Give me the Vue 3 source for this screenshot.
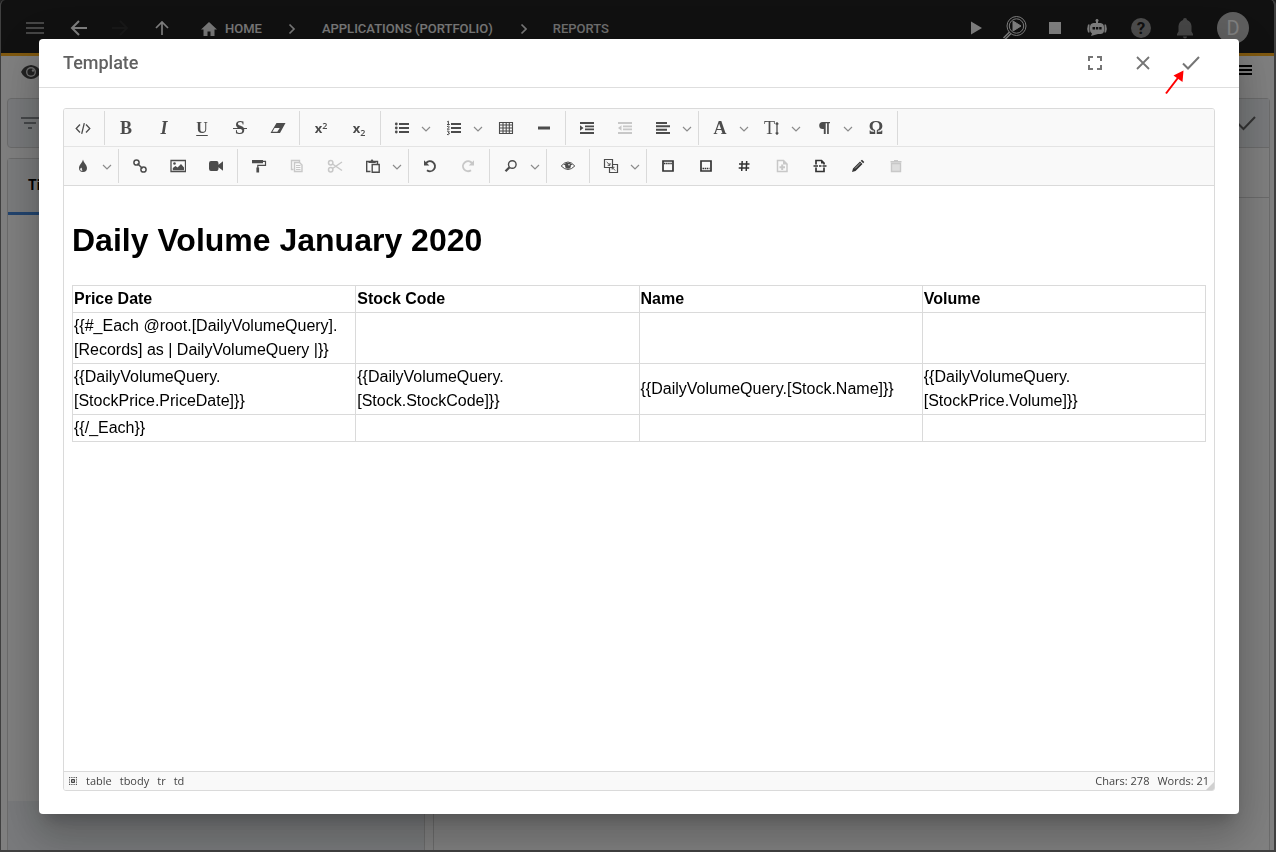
<script setup>
const icons = {
  source: '<path d="M5 4.500 1.200 8.500 5 12.500M11 4.500 14.800 8.500 11 12.500M9.300 3.200 6.700 13.800" fill="none" stroke="currentColor" stroke-width="1.300"/>',
  eraser: '<path d="M6.500 3H15.500L10 13H.5ZM4.600 8 2.400 11.800H7.300L9.700 8Z" fill="currentColor" fill-rule="evenodd"/>',
  ul: '<path d="M5 3h10v2H5zM5 7h10v2H5zM5 11h10v2H5z" fill="currentColor"/><circle cx="2.300" cy="4" r="1.400" fill="currentColor"/><circle cx="2.300" cy="8" r="1.400" fill="currentColor"/><circle cx="2.300" cy="12" r="1.400" fill="currentColor"/>',
  ol: '<path d="M5 3h10v2H5zM5 7h10v2H5zM5 11h10v2H5z" fill="currentColor"/><path d="M1.200 1.800 2.400 1.200V4.500M1 4.500h2.800M1 6.700Q2.500 5.500 3.200 6.600 3.400 7.500 1.200 9.200H3.600M1 11.200Q3.300 10.500 3.300 12 3.200 12.700 2 12.700 3.600 12.700 3.400 13.900 3 15 1 14.500" fill="none" stroke="currentColor"/>',
  table: '<path d="M1.500 2.500h13v11h-13zM1.500 5h13M1.500 8h13M1.500 11h13M5 3v10M8.200 3v10M11.300 3v10" fill="none" stroke="currentColor" stroke-width="1.100"/>',
  hr: '<path d="M2 6.500h12v3H2z" fill="currentColor"/>',
  indent: '<path d="M1 2h14v2H1zM6 5.500h9v1.800H6zM6 8.500h9v1.800H6zM1 12h14v2H1zM1 5.200 4.500 8 1 10.800z" fill="currentColor"/>',
  outdent: '<path d="M1 2h14v2H1zM6 5.500h9v1.800H6zM6 8.500h9v1.800H6zM1 12h14v2H1zM4.500 5.200 1 8l3.500 2.800z" fill="currentColor"/>',
  left: '<path d="M1 2h11v2H1zM1 5.300h14v2H1zM1 8.700h11v2H1zM1 12h14v2H1z" fill="currentColor"/>',
  vsize: '<path d="M13 3V14M11.700 4.300 13 2.700 14.300 4.300M11.700 12.700 13 14.300 14.300 12.700" fill="none" stroke="currentColor" stroke-width="1.300"/>',
  para: '<path d="M6.700 2H14v1.300h-1.200V14h-1.700V3.300H9.700V14H7.800V9H6.700A3.500 3.500 0 0 1 6.700 2z" fill="currentColor"/>',
  drop: '<path d="M8 1.500C8.500 4.500 12 7 12 10A4 4 0 0 1 4 10C4 7 7.500 4.500 8 1.500ZM6.900 9.700A1.500 1.500 0 1 0 7.700 12.300C6.700 11.800 6.600 10.500 6.900 9.700Z" fill="currentColor" fill-rule="evenodd"/>',
  link: '<circle cx="4.500" cy="4.500" r="2.600"/><circle cx="11.500" cy="11.500" r="2.600"/><path d="M5.500 5.500 10.500 10.500"/>',
  image: '<path d="M1 2.500h14.500v11H1z" fill="none" stroke="currentColor" stroke-width="1.300"/><circle cx="4.500" cy="5.500" r="1.300" fill="currentColor"/><path d="M2.800 12.200V10L5.500 8l2 1.500L11 6l3 3.500v2.700z" fill="currentColor"/>',
  video: '<path d="M3 3h5.500Q10.500 3 10.500 5.200V6.800L15 3.200V12.800L10.500 9.200V10.800Q10.500 13 8.500 13H3Q1 13 1 10.800V5.200Q1 3 3 3z" fill="currentColor"/>',
  roller: '<path d="M1 2h11v3.300H1z" fill="currentColor"/><path d="M12 3.300h2.500v4H6.800V10" fill="none" stroke="currentColor" stroke-width="1.200"/><path d="M5.400 9.500h2.700v5H5.400z" fill="currentColor"/>',
  copy: '<path d="M4.500 11.500h-2v-9h8v2" fill="none" stroke="currentColor" stroke-width="1.400"/><path d="M5.500 4.500h5l2.500 2.500v6.500H5.500z" fill="none" stroke="currentColor" stroke-width="1.400"/><path d="M7 7.500h4.500M7 9.500h4.500M7 11.500h4.500" stroke="currentColor" stroke-width="1.100"/>',
  cut: '<circle cx="3.700" cy="4.700" r="2.200"/><circle cx="3.700" cy="11.700" r="2.200"/><path d="M5.500 6 15 12.500M5.500 10.500 15 4M9 8.500H10"/>',
  paste: '<path d="M5.500 13.500H1.700v-10H12.500V6" fill="none" stroke="currentColor" stroke-width="1.400"/><path d="M3.500 5V3H5.500L7 1l1.500 2h2.200v2z" fill="currentColor"/><path d="M7.200 6.500h7v7.800h-7z" fill="none" stroke="currentColor" stroke-width="1.400"/>',
  undo: '<path d="M4 5.200A5 5 0 1 1 5 12.200" fill="none" stroke="currentColor" stroke-width="1.900"/><path d="M2 2.300V7.500H7.300z" fill="currentColor"/>',
  redo: '<path d="M12 5.200A5 5 0 1 0 11 12.200" fill="none" stroke="currentColor" stroke-width="1.900"/><path d="M14 2.300V7.500H8.700z" fill="currentColor"/>',
  find: '<circle cx="9.300" cy="6.500" r="3.800" fill="none" stroke="currentColor" stroke-width="1.400"/><path d="M6.300 9.500 2.500 13.300" stroke="currentColor" stroke-width="2.300"/>',
  eye: '<path d="M1.200 8Q8 0 14.800 8 8 15 1.200 8z" fill="none" stroke="currentColor"/><path d="M3.500 6.500Q8 3 12.500 6.500L11 7.300H5z" fill="currentColor"/><circle cx="8" cy="7.800" r="2.900" fill="currentColor"/><circle cx="9" cy="6.700" r=".8" fill="#f9f9f9"/>',
  translate: '<path d="M1.500 1.500h8v8h-8zM9.700 6.500h4.800v8h-8V9.700" fill="none" stroke="currentColor" stroke-width="1.200"/><path d="M3.700 4 7 7.300M4.700 7.300H7V5M8.700 9l3.500 3.500M9.200 11.500V9.300H11.500" fill="none" stroke="currentColor"/>',
  header: '<path d="M3 3h10v10H3z" fill="none" stroke="currentColor" stroke-width="1.700"/><path d="M4 5.500h8" stroke="currentColor" stroke-width="1.500" stroke-dasharray="1.500 .6"/>',
  footer: '<path d="M3 3h10v10H3z" fill="none" stroke="currentColor" stroke-width="1.700"/><path d="M4.500 10.500h7" stroke="currentColor" stroke-width="1.500" stroke-dasharray="1.500 .6"/>',
  hash: '<path d="M6.200 3 5.700 13M10.700 3 10.200 13M3 6h10.500M2.700 10H13.200" stroke="currentColor" stroke-width="1.500"/>',
  page: '<path d="M3.500 2.500h6L13 6v7.500H3.500z" fill="none" stroke="currentColor" stroke-width="1.500"/><path d="M9 2v4.500h4.500z" fill="currentColor"/><path d="M8.200 6.500V12M5.500 9.200H11" stroke="currentColor" stroke-width="2"/>',
  break: '<path d="M4 6.500V2.500h5.500L12 5v1.500M4 9.500v4h8v-4M1.500 8H6M7 8h2.500M10.500 8h4" fill="none" stroke="currentColor" stroke-width="1.700"/><path d="M9 2v3.500h3.500z" fill="currentColor"/>',
  pencil: '<path d="M2 14 3 10.500 10 3.500 12.500 6 5.500 13zM10.700 2.800 12 1.700 14.300 4 13.200 5.200z" fill="currentColor"/><path d="M5 10.500 10.500 5" stroke="#aaa"/>',
  trash: '<path d="M3.500 5.500h9v8h-9zM2.500 3.700h11M6 2.700h4" fill="none" stroke="currentColor" stroke-width="1.400"/><path d="M4 6h8v7H4z" fill="currentColor" opacity=".55"/>'
}
const stroked = ['link', 'cut']

const b = (label, icon, opt = {}) => ({ label, icon, ...opt })
const t = (label, text, cls, opt = {}) => ({ label, text, cls, ...opt })
const rows = [
  [
    [b('Source', 'source')],
    [t('Bold', 'B', 'bold'), t('Italic', 'I', 'italic'), t('Underline', 'U', 'under'), t('Strike through', 'S', 'strike'), b('Clear formatting', 'eraser')],
    [t('Superscript', 'x', 'script', { sup: '2' }), t('Subscript', 'x', 'script', { sub: '2' })],
    [b('Bulleted list', 'ul', { menu: true }), b('Numbered list', 'ol', { menu: true }), b('Insert table', 'table'), b('Horizontal line', 'hr')],
    [b('Indent', 'indent'), b('Outdent', 'outdent', { off: true }), b('Align', 'left', { menu: true })],
    [t('Font family', 'A', 'bold', { menu: true }), t('Font size', 'T', 'size', { menu: true, icon: 'vsize' }), b('Paragraph format', 'para', { menu: true }), t('Symbols', 'Ω', 'bold')]
  ],
  [
    [b('Text colour', 'drop', { menu: true })],
    [b('Link', 'link'), b('Image', 'image'), b('Video', 'video')],
    [b('Copy format', 'roller'), b('Copy', 'copy', { off: true }), b('Cut', 'cut', { off: true }), b('Paste', 'paste', { menu: true })],
    [b('Undo', 'undo'), b('Redo', 'redo', { off: true })],
    [b('Find', 'find', { menu: true })],
    [b('Preview', 'eye')],
    [b('Fields', 'translate', { menu: true })],
    [b('Page header', 'header', { dark: true }), b('Page footer', 'footer', { dark: true }), b('Page number', 'hash', { dark: true }), b('Add page', 'page', { off: true }), b('Page break', 'break', { dark: true }), b('Edit', 'pencil', { dark: true }), b('Delete', 'trash', { off: true })]
  ]
]

const columns = ['Price Date', 'Stock Code', 'Name', 'Volume']
const records = [
  ['{{#_Each @root.[DailyVolumeQuery].[Records] as | DailyVolumeQuery |}}', '', '', ''],
  ['{{DailyVolumeQuery.[StockPrice.PriceDate]}}', '{{DailyVolumeQuery.[Stock.StockCode]}}', '{{DailyVolumeQuery.[Stock.Name]}}', '{{DailyVolumeQuery.[StockPrice.Volume]}}'],
  ['{{/_Each}}', '', '', '']
]
const path = ['table', 'tbody', 'tr', 'td']
</script>

<template>
  <div class="app">
    <header class="topbar">
      <button class="nav wide" aria-label="Menu"><svg class="dim" width="20" height="20" viewBox="0 0 20 20"><path d="M1 5h18M1 10h18M1 15h18" stroke="currentColor" stroke-width="2" /></svg></button>
      <button class="nav wide" aria-label="Back"><svg width="20" height="20" viewBox="0 0 20 20" fill="none" stroke="currentColor" stroke-width="2"><path d="M18 10H3M10 3 3 10l7 7" /></svg></button>
      <button class="nav" aria-label="Forward"><svg class="faint" width="20" height="20" viewBox="0 0 20 20" fill="none" stroke="currentColor" stroke-width="2"><path d="M1 10h14M9 3l7 7-7 7" /></svg></button>
      <button class="nav up" aria-label="Up"><svg width="20" height="20" viewBox="0 0 20 20" fill="none" stroke="currentColor" stroke-width="1.700"><path d="M10 17V4M4 10l6-6 6 6" /></svg></button>
      <nav class="crumbs" aria-label="Breadcrumb">
        <a href="#"><svg width="16" height="16" viewBox="0 0 16 16"><path d="M8 1 0 8.500h2.500V15h4v-4.500h3V15h4V8.500H16z" fill="currentColor" /></svg>HOME</a>
        <svg class="sep" width="8" height="12" viewBox="0 0 8 12"><path d="M1.500 1.500 6 6l-4.500 4.500" fill="none" stroke="currentColor" stroke-width="1.700" /></svg>
        <a href="#">APPLICATIONS (PORTFOLIO)</a>
        <svg class="sep" width="8" height="12" viewBox="0 0 8 12"><path d="M2.500 1.500 7 6l-4.500 4.500" fill="none" stroke="currentColor" stroke-width="1.700" /></svg>
        <a href="#" class="here">REPORTS</a>
      </nav>
      <button class="nav" aria-label="Run"><svg width="24" height="24" viewBox="0 0 24 24"><path d="M8 5.500v13L19 12z" fill="currentColor" /></svg></button>
      <button class="nav" aria-label="Preview run"><svg width="26" height="26" viewBox="0 0 26 26" fill="none" stroke="currentColor"><circle cx="14.500" cy="11" r="9.500" /><circle cx="14.500" cy="11" r="7.200" /><path d="M11 6v10l8-5z" fill="currentColor" /><path d="M7.500 17 1.500 23M9 18.500 3 24.500" stroke-width="1.500" /></svg></button>
      <button class="nav" aria-label="Stop"><svg width="24" height="24" viewBox="0 0 24 24"><path d="M6 6h12v12H6z" fill="currentColor" /></svg></button>
      <button class="nav wide" aria-label="Assistant"><svg width="24" height="24" viewBox="0 0 24 24"><path fill="currentColor" fill-rule="evenodd" d="M11 3.500h2V7h2.500Q19 7.500 19 11v4Q18.500 18 15.500 18H13l-7 2 1-2.500Q5 16.500 5 14v-3Q5 7.500 8.500 7H11zM7.500 11v2.500H10V11zM10.900 11v2.500h2.400V11zM14.200 11v2.500h2.400V11zM3 8.500H4.500v8H3q-1.500-4 0-8zM19.500 8.500H21q1.500 4 0 8h-1.500z" /><circle cx="12" cy="4.500" r="1.500" fill="currentColor" /></svg></button>
      <button class="nav wide" aria-label="Help"><span class="help">?</span></button>
      <button class="nav wide" aria-label="Notifications"><svg class="dim" width="24" height="24" viewBox="0 0 24 24"><path d="M12 2a2 2 0 0 0-2 2Q6 5.500 5.500 10v5.500L4 18v1.500h16V18l-1.500-2.500V10Q18 5.500 14 4a2 2 0 0 0-2-2zM10 20.500h4a2 2 0 0 1-4 0z" fill="currentColor" /></svg></button>
      <button class="avatar" aria-label="Account">D</button>
    </header>

    <div class="subbar">
      <button class="plain" aria-label="View"><svg width="20" height="16" viewBox="0 0 20 16"><path d="M10 1Q17 1.500 20 8q-3 6.500-10 7Q3 14.500 0 8 3 1.500 10 1z" fill="#444" /><circle cx="10" cy="8" r="5" fill="#ddd" /><circle cx="10" cy="8" r="3.600" fill="#444" /><circle cx="12" cy="6.500" r="1.200" fill="#ddd" /></svg></button>
      <button class="plain" aria-label="Options"><svg width="18" height="16" viewBox="0 0 18 16"><path d="M0 2h18M0 6h18M0 10h18" stroke="#000" stroke-width="2" /></svg></button>
    </div>

    <main class="columns">
      <section class="list">
        <div class="filter"><svg width="20" height="14" viewBox="0 0 20 14"><path d="M0 2h20M3 7h12M7 12h4" stroke="#8c9094" stroke-width="2" /></svg></div>
        <div class="results">
          <div class="heading">Title</div>
          <div class="foot"></div>
        </div>
      </section>
      <section class="detail">
        <div class="actions"><svg width="20" height="16" viewBox="0 0 20 16"><path d="M1 8.500 6.500 14 18 2" fill="none" stroke="#666" stroke-width="2" /></svg></div>
        <div class="tabs"></div>
      </section>
    </main>

    <div class="backdrop">
      <section class="dialog" role="dialog" aria-labelledby="dialog-title">
        <header class="dialog-head">
          <h2 id="dialog-title">Template</h2>
          <button class="tool" aria-label="Full screen"><svg width="16" height="16" viewBox="0 0 16 16"><path d="M2 6V2h4M10 2h4v4M14 10v4h-4M6 14H2v-4" fill="none" stroke="currentColor" stroke-width="2" /></svg></button>
          <button class="tool" aria-label="Close"><svg width="16" height="16" viewBox="0 0 16 16"><path d="M2 2l12 12M14 2 2 14" fill="none" stroke="currentColor" stroke-width="1.800" /></svg></button>
          <button class="tool" aria-label="Accept">
            <svg width="18" height="16" viewBox="0 0 18 16"><path d="M1 8.500 6 13.500 17 2" fill="none" stroke="currentColor" stroke-width="2" /></svg>
            <svg class="pointer" width="22" height="26" viewBox="0 0 22 26"><path d="M2 24.500 15 7.500" stroke="#f00" stroke-width="2" /><path d="M19.500 1.500 9.500 6.500 18.500 13z" fill="#f00" /></svg>
          </button>
        </header>

        <div class="editor">
          <div class="toolbar" role="toolbar" aria-label="Formatting">
            <div v-for="(row, r) in rows" :key="r" class="row">
              <div v-for="(group, g) in row" :key="g" class="group">
                <div v-for="item in group" :key="item.label" class="item" :class="{ split: item.menu, off: item.off, dark: item.dark }">
                  <button class="main" :aria-label="item.label" :disabled="item.off">
                    <span v-if="item.text" class="letter" :class="item.cls">{{ item.text }}<sup v-if="item.sup">{{ item.sup }}</sup><sub v-if="item.sub">{{ item.sub }}</sub></span>
                    <svg v-if="item.icon" width="16" height="16" viewBox="0 0 16 16" :class="{ stroked: stroked.includes(item.icon), over: item.text }" v-html="icons[item.icon]"></svg>
                  </button>
                  <button v-if="item.menu" class="more" :aria-label="item.label + ' options'"><svg width="10" height="6" viewBox="0 0 10 6"><path d="M1 1l4 4 4-4" fill="none" stroke="currentColor" stroke-width="1.200" /></svg></button>
                </div>
              </div>
            </div>
          </div>

          <article class="content">
            <h1>Daily Volume January 2020</h1>
            <table>
              <thead>
                <tr><th v-for="c in columns" :key="c" scope="col">{{ c }}</th></tr>
              </thead>
              <tbody>
                <tr v-for="(rec, i) in records" :key="i">
                  <td v-for="(cell, j) in rec" :key="j">{{ cell }}</td>
                </tr>
              </tbody>
            </table>
          </article>

          <footer class="status">
            <button class="select-all" aria-label="Select all"><svg width="8" height="8" viewBox="0 0 8 8"><path d="M0 .5h8M0 7.500h8M.5 0v8M7.500 0v8" stroke="#555" stroke-dasharray="1 .75" /><path d="M2.500 2.500h3v3h-3z" fill="#aaa" stroke="#444" /></svg></button>
            <a v-for="p in path" :key="p" href="#">{{ p }}</a>
            <span class="chars">Chars: 278</span>
            <span>Words: 21</span>
            <i class="grip"></i>
          </footer>
        </div>
      </section>
    </div>
  </div>
</template>

<style>
html, body { margin: 0; background: #404040; }
</style>

<style scoped>
* { box-sizing: border-box; }
button { border: 0; padding: 0; background: none; font: inherit; color: inherit; display: flex; align-items: center; justify-content: center; flex: none; }
a { color: inherit; text-decoration: none; }
svg { display: block; flex: none; }

.app { height: 100vh; display: flex; flex-direction: column; background: #fff; border: solid #808080; border-width: 0 2px 2px 1px; border-radius: 5px 5px 0 0; overflow: hidden; font-family: Roboto, "Open Sans", sans-serif; }
.topbar { flex: none; display: flex; align-items: center; height: 56px; padding: 3px 25px 0 12px; background: #222; color: #fff; border-bottom: 3px solid #ffb11f; }
.nav { width: 40px; height: 44px; }
.nav.wide { width: 44px; }
.nav.up { width: 42px; }
.dim { color: #8c8c8c; }
.faint { color: #303030; }
.crumbs { flex: 1; display: flex; align-items: center; padding: 1px 0 0 18px; font-size: 13px; font-weight: 500; line-height: 20px; color: #f0f0f0; }
.crumbs a { display: flex; align-items: center; gap: 8px; }
.crumbs .sep { margin: 0 26px; }
.crumbs .here { color: #ddd; }
.help { width: 20px; height: 20px; border-radius: 50%; background: #999; color: #222; font-size: 17px; font-weight: 700; line-height: 20px; text-align: center; }
.avatar { width: 32px; height: 32px; margin-left: 10px; border-radius: 50%; background: #bdbdbd; color: #fff; font-size: 20px; }

.subbar { flex: none; display: flex; justify-content: space-between; align-items: center; height: 32px; padding: 0 22px 0 20px; }
.columns { flex: 1; display: flex; gap: 8px; padding: 10px 4px 0 6px; min-height: 0; }
.list { width: 418px; flex: none; display: flex; flex-direction: column; gap: 10px; }
.filter { height: 50px; padding: 17px 13px; background: #f0f3f6; border: 1px solid #d6d6d6; border-radius: 4px; }
.results { flex: 1; display: flex; flex-direction: column; border: 1px solid #d6d6d6; border-bottom: 0; border-radius: 4px 4px 0 0; }
.heading { height: 56px; padding-left: 20px; background: #f4f6f8; border-bottom: 3px solid #4488dc; font-size: 14px; font-weight: 700; line-height: 52px; }
.foot { height: 49px; margin-top: auto; background: #f0f3f6; }
.detail { flex: 1; border: 1px solid #d6d6d6; border-bottom: 0; border-radius: 4px 4px 0 0; }
.actions { display: flex; justify-content: flex-end; height: 49px; padding: 16px 12px; background: #f0f3f6; border-bottom: 1px solid #d6d6d6; }
.tabs { height: 50px; border-bottom: 1px solid #d6d6d6; }

.backdrop { position: fixed; inset: 0; display: flex; padding: 39px 37px 38px 39px; background: rgba(0, 0, 0, .5); }
.dialog { flex: 1; display: flex; flex-direction: column; min-width: 0; background: #fff; border-radius: 4px; box-shadow: 0 11px 15px -7px rgba(0, 0, 0, .2), 0 24px 38px 3px rgba(0, 0, 0, .14), 0 9px 46px 8px rgba(0, 0, 0, .12); }
.dialog-head { flex: none; display: flex; align-items: center; height: 49px; padding: 0 24px; border-bottom: 1px solid #dedede; color: #757575; }
.dialog-head h2 { flex: 1; margin: 0; font-size: 18px; font-weight: 500; line-height: 24px; color: #616161; }
.tool { position: relative; width: 48px; height: 48px; }
.pointer { position: absolute; left: -3px; top: 30px; }

.editor { flex: 1; display: flex; flex-direction: column; min-height: 0; margin: 20px 24px 23px; border: 1px solid #dadada; border-radius: 3px; overflow: hidden; }
.toolbar { flex: none; background: #f9f9f9; border-bottom: 1px solid #dadada; color: #4c4c4c; }
.row { display: flex; height: 38px; padding-top: 2px; }
.row:first-child { border-bottom: 1px solid #e4e4e4; }
.group { display: flex; height: 34px; padding: 0 2px; border-right: 1px solid #dadada; }
.group:first-child { padding-left: 0; }
.row:last-child .group:last-child { border-right: 0; }
.item { display: flex; }
.main { position: relative; width: 38px; height: 34px; }
.more { width: 14px; height: 34px; padding-top: 1px; color: #8c8c8c; justify-content: flex-start; }
.off { color: #c8c8c8; }
.dark { color: #333; }
.stroked { fill: none; stroke: currentColor; stroke-width: 1.5px; }
.letter { font-family: "Liberation Serif", serif; font-size: 18px; line-height: 20px; }
.bold { font-weight: 700; }
.italic { font-weight: 700; font-style: italic; }
.under { font-weight: 700; font-size: 16px; text-decoration: underline; text-decoration-thickness: 1px; text-underline-offset: 2px; }
.strike { width: 14px; text-align: center; font-weight: 700; background: linear-gradient(#4c4c4c, #4c4c4c) center 10px / 14px 1px no-repeat; }
.script { font-family: "Open Sans", sans-serif; font-weight: 700; font-size: 13px; display: flex; align-items: center; }
.script sup, .script sub { font-size: 9px; font-weight: 600; line-height: 10px; vertical-align: baseline; }
.script sup { margin-bottom: 5px; }
.script sub { margin-top: 9px; }
.size { width: 16px; text-align: left; }
.over { position: absolute; left: 11px; top: 9px; }

.content { flex: 1; min-height: 0; padding: 8px; overflow: auto; font-family: "Liberation Sans", Arial, sans-serif; font-size: 16px; line-height: 24px; color: #000; }
.content h1 { margin: 22px 0 21px; font-size: 32px; line-height: 48px; }
.content table { width: 100%; table-layout: fixed; border-collapse: collapse; }
.content th, .content td { height: 27px; padding: 1px; border: 1px solid #dadada; text-align: left; vertical-align: middle; }

.status { position: relative; flex: none; display: flex; align-items: center; gap: 8px; height: 19px; padding: 0 5px; background: #f9f9f9; border-top: 1px solid #dadada; font-family: "Open Sans", sans-serif; font-size: 11px; line-height: 18px; color: #444; }
.select-all { width: 8px; }
.select-all + a { margin-left: 1px; }
.chars { margin-left: auto; }
.grip { position: absolute; right: 0; bottom: 0; border: 4px solid; border-color: transparent #d0d0d0 #d0d0d0 transparent; }
</style>
